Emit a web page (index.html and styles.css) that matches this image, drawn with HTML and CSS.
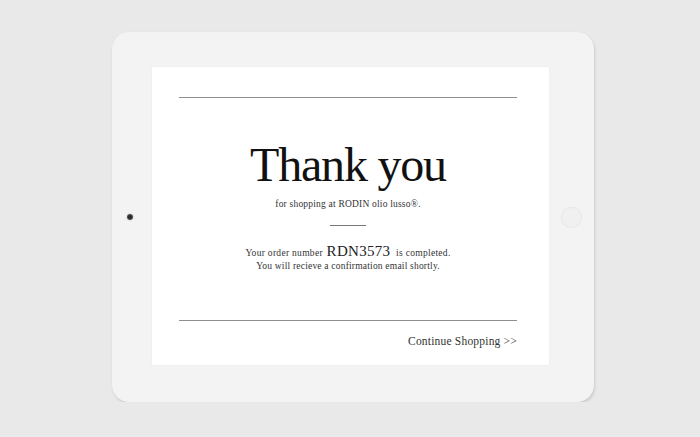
FILE: index.html
```html
<!DOCTYPE html>
<html>
<head>
<meta charset="utf-8">
<link rel="stylesheet" href="styles.css">
</head>
<body>
<div class="tablet">
  <div class="bezel-left"><span class="camera"></span></div>
  <main class="screen">
    <hr class="rule">
    <h1 class="title">Thank you</h1>
    <p class="subtitle">for shopping at RODIN olio lusso®.</p>
    <hr class="short-rule">
    <p class="order">Your order number <span class="order-num">RDN3573</span> is completed.</p>
    <p class="note">You will recieve a confirmation email shortly.</p>
    <hr class="rule rule-bottom">
    <a class="continue" href="#">Continue Shopping &gt;&gt;</a>
  </main>
  <div class="bezel-right"><span class="home"></span></div>
</div>
</body>
</html>
```
FILE: styles.css
```css
html, body {
  margin: 0;
  padding: 0;
  background: #e9e9e9;
  font-family: "Liberation Serif", "Times New Roman", serif;
  color: #222;
}
body {
  padding: 32px 0 0 112px;
}
.tablet {
  width: 482px;
  height: 370px;
  box-sizing: border-box;
  background: #f3f3f3;
  border-radius: 17px;
  box-shadow: 1px 2px 3px rgba(0,0,0,0.12), 0 0 1px rgba(0,0,0,0.06);
  display: flex;
  align-items: center;
}
.bezel-left {
  width: 40px;
  box-sizing: border-box;
  padding-right: 4px;
  display: flex;
  justify-content: center;
}
.camera {
  width: 6px;
  height: 6px;
  border-radius: 50%;
  background: radial-gradient(circle at 50% 50%, #222 0, #333 45%, #888 100%);
  box-shadow: 0 0 2px rgba(0,0,0,0.25);
}
.bezel-right {
  width: 45px;
  display: flex;
  justify-content: center;
}
.home {
  width: 21px;
  height: 21px;
  border-radius: 50%;
  background: #f0f0f0;
  box-shadow: inset 0 0 2px rgba(0,0,0,0.08), 0 0 1px rgba(0,0,0,0.05);
}
.screen {
  width: 397px;
  height: 298px;
  margin-top: -2px;
  box-sizing: border-box;
  background: #fff;
  box-shadow: 0 0 1px rgba(0,0,0,0.08);
  padding: 30px 32px 0 27px;
  display: flex;
  flex-direction: column;
  align-items: center;
}
.rule {
  width: 100%;
  margin: 0;
  border: 0;
  border-top: 1px solid #8e8e8e;
}
.title {
  margin: 39px 0 0;
  font-weight: normal;
  font-size: 48px;
  line-height: 56px;
  letter-spacing: -1.2px;
  color: #111;
}
.subtitle {
  margin: 4px 0 0;
  font-size: 9.5px;
  letter-spacing: 0.2px;
  line-height: 14px;
  color: #333;
}
.short-rule {
  width: 36px;
  margin: 14px 0 0;
  border: 0;
  border-top: 1px solid #777;
}
.order {
  margin: 17px 0 0;
  font-size: 9.5px;
  letter-spacing: 0.3px;
  line-height: 17px;
  color: #333;
}
.order-num {
  font-size: 15px;
  letter-spacing: 0.3px;
  margin: 0 3px 0 1px;
  color: #222;
}
.note {
  margin: -3px 0 0;
  font-size: 9.5px;
  letter-spacing: 0.2px;
  line-height: 14px;
  color: #333;
}
.rule-bottom {
  margin-top: 47px;
}
.continue {
  align-self: flex-end;
  margin-top: 14px;
  font-size: 11.5px;
  letter-spacing: 0.2px;
  color: #333;
  text-decoration: none;
}
```
